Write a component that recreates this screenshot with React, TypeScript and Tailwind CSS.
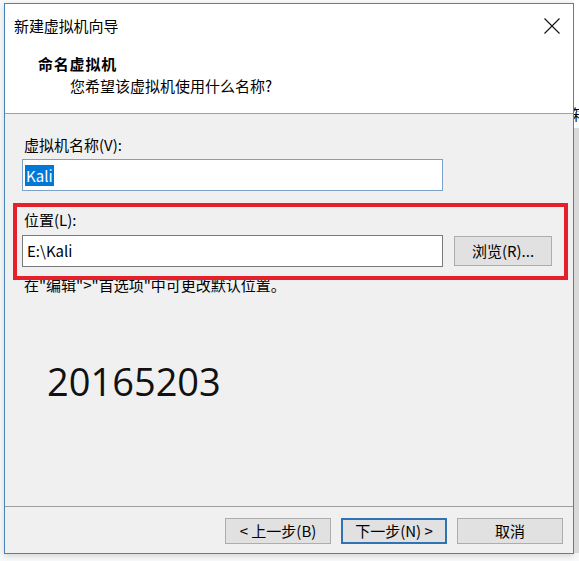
import React from "react";

const F = { fontFamily: '"Noto Sans CJK SC", "Noto Sans", sans-serif' };

export default function App() {
  return (
    <div
      className="relative w-[579px] h-[561px] overflow-hidden bg-[#f7f9fb] pt-[3px] pl-[4px] text-black"
      style={F}
    >
      {/* desktop strip to the right of the window */}
      <div className="absolute left-[574px] top-0 w-[5px] h-[553px] flex flex-col">
        <div className="h-[128px] bg-white relative overflow-hidden">
          <span className="absolute left-[-2px] top-[104px] text-[15px] leading-[20px]">箱</span>
        </div>
        <div className="flex-1 bg-[#d9d9d9]" />
      </div>

      {/* dialog window */}
      <div className="w-[570px] h-[551px] border border-[#4a83b8] flex flex-col bg-[#f0f0f0] shadow-[0_2px_6px_rgba(0,0,0,0.15)]">
        {/* header */}
        <div className="h-[109px] bg-white flex flex-col pl-[9px] pt-[12px] relative">
          <div className="text-[15px] leading-[20px] tracking-[-0.1px]">新建虚拟机向导</div>
          <svg
            className="absolute left-[536px] top-[11px]"
            width="22"
            height="22"
            viewBox="0 0 22 22"
          >
            <path d="M3.5 3.5 L18.5 18.5 M18.5 3.5 L3.5 18.5" stroke="#111" strokeWidth="1.1" fill="none" />
          </svg>
          <div className="mt-[18px] ml-[24px] text-[15px] leading-[20px] font-bold tracking-[0.8px]">命名虚拟机</div>
          <div className="mt-[2px] ml-[56px] text-[15px] leading-[20px]">您希望该虚拟机使用什么名称?</div>
        </div>
        <div className="h-px bg-[#a0a0a0]" />

        {/* body */}
        <div className="relative h-[392px] flex flex-col pl-[17px] pt-[21px]">
          <div className="ml-[2px] text-[15px] leading-[20px]">虚拟机名称(V):</div>
          <div className="mt-[4px] w-[421px] h-[32px] bg-white border border-[#7ba3ca] flex items-center pl-[2px]">
            <span className="bg-[#0078d7] text-white text-[15px] leading-[21px] px-px">Kali</span>
          </div>

          <div className="mt-[19px] ml-[2px] text-[15px] leading-[20px]">位置(L):</div>
          <div className="mt-[5px] flex items-center gap-[11px]">
            <div className="w-[421px] h-[32px] bg-white border border-[#7a7a7a] flex items-center pl-[4px]">
              <span className="text-[15px] leading-[20px]">E:\Kali</span>
            </div>
            <div className="w-[98px] h-[30px] bg-[#e1e1e1] border border-[#adadad] flex items-center justify-center text-[15px] leading-[20px]">
              浏览(R)...
            </div>
          </div>

          <div className="mt-[8px] ml-[2px] text-[15px] leading-[20px]">{'在"编辑">"首选项"中可更改默认位置。'}</div>

          <div
            className="mt-[63px] ml-[25px] text-[38px] leading-[46px] text-[#111]"
            style={{ fontFamily: '"Open Sans", "Noto Sans", sans-serif' }}
          >
            20165203
          </div>

          {/* red annotation frame */}
          <div className="absolute left-[8px] top-[89px] w-[555px] h-[77px] border-4 border-[#e5202b]" />
        </div>
        <div className="h-px bg-[#a0a0a0]" />

        {/* footer */}
        <div className="flex-1 flex justify-end items-start pt-[11px] pr-[10px] gap-[10px]">
          <div className="w-[106px] h-[26px] bg-[#e1e1e1] border border-[#adadad] flex items-center justify-center text-[15px] leading-[20px]">
            &lt; 上一步(B)
          </div>
          <div className="w-[106px] h-[26px] bg-[#e1e1e1] border-2 border-[#2f73b5] flex items-center justify-center text-[15px] leading-[20px]">
            下一步(N) &gt;
          </div>
          <div className="w-[106px] h-[26px] bg-[#e1e1e1] border border-[#adadad] flex items-center justify-center text-[15px] leading-[20px]">
            取消
          </div>
        </div>
      </div>
    </div>
  );
}
